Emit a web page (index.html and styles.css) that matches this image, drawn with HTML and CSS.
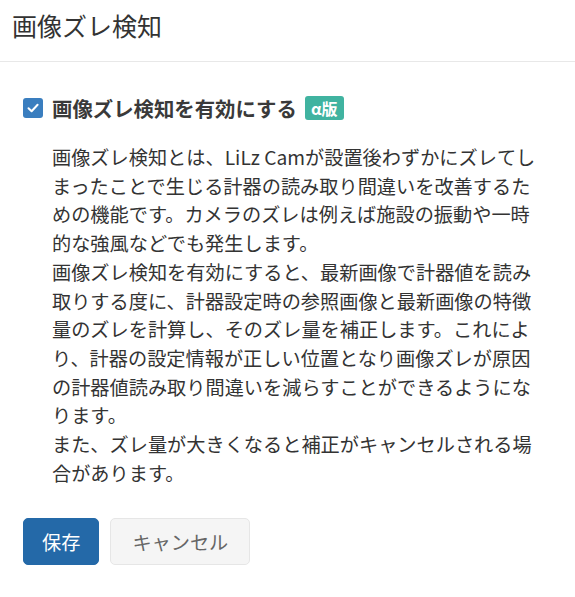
FILE: index.html
```html
<!DOCTYPE html>
<html lang="ja">
<head>
    <meta charset="UTF-8">
    <meta name="viewport" content="width=device-width, initial-scale=1.0">
    <title>画像ズレ検知</title>
    <link rel="stylesheet" href="styles.css">
</head>
<body>
    <div class="modal-header">
        <h1>画像ズレ検知</h1>
    </div>
    <div class="modal-body">
        <label class="check-row">
            <span class="checkbox">
                <svg width="14" height="14" viewBox="0 0 14 14">
                    <path d="M2.5 7.2 L5.6 10.2 L11.6 3.8" fill="none" stroke="#fff" stroke-width="2" stroke-linecap="round" stroke-linejoin="round"/>
                </svg>
            </span>
            <span class="check-label">画像ズレ検知を有効にする</span>
            <span class="badge">α版</span>
        </label>
        <p class="description">
            画像ズレ検知とは、LiLz Camが設置後わずかにズレてし<br>
            まったことで生じる計器の読み取り間違いを改善するた<br>
            めの機能です。カメラのズレは例えば施設の振動や一時<br>
            的な強風などでも発生します。<br>
            画像ズレ検知を有効にすると、最新画像で計器値を読み<br>
            取りする度に、計器設定時の参照画像と最新画像の特徴<br>
            量のズレを計算し、そのズレ量を補正します。これによ<br>
            り、計器の設定情報が正しい位置となり画像ズレが原因<br>
            の計器値読み取り間違いを減らすことができるようにな<br>
            ります。<br>
            また、ズレ量が大きくなると補正がキャンセルされる場<br>
            合があります。
        </p>
        <div class="actions">
            <button class="btn btn-primary">保存</button>
            <button class="btn btn-default">キャンセル</button>
        </div>
    </div>
</body>
</html>
```

FILE: styles.css
```css
body {
    margin: 0;
    font-family: "Noto Sans CJK JP", "Noto Sans", sans-serif;
    color: #333;
    background-color: #fff;
}
.modal-header {
    height: 61px;
    padding: 0 12px;
    border-bottom: 1px solid #e8e8e8;
    display: flex;
    align-items: center;
}
h1 {
    margin: 0;
    margin-top: -12px;
    font-size: 25px;
    font-weight: 400;
    color: #333;
}
.modal-body {
    padding: 33px 23px 0 23px;
}
.check-row {
    display: flex;
    align-items: center;
    height: 26px;
}
.checkbox {
    width: 20px;
    height: 20px;
    border-radius: 3px;
    background-color: #3a7ebf;
    display: flex;
    align-items: center;
    justify-content: center;
}
.check-label {
    margin-left: 9px;
    font-size: 20.4px;
    font-weight: 700;
    color: #3a3a3a;
}
.badge {
    margin-left: 8px;
    background-color: #40b3a0;
    color: #fff;
    font-size: 16px;
    font-weight: 700;
    height: 24px;
    line-height: 24px;
    padding: 0 6px;
    border-radius: 3px;
}
.description {
    margin: 22px 0 0 29px;
    font-size: 19.2px;
    line-height: 28.7px;
    color: #333;
    white-space: nowrap;
}
.actions {
    display: flex;
    gap: 11px;
    margin-top: 31px;
}
.btn {
    height: 47px;
    padding: 0 18px;
    font-family: inherit;
    font-size: 19.2px;
    border-radius: 5px;
    cursor: pointer;
}
.btn-primary {
    background-color: #2469a8;
    color: #fff;
    border: 1px solid #2469a8;
}
.btn-default {
    padding: 0 21px;
    background-color: #f5f5f5;
    color: #666;
    border: 1px solid #e6e6e6;
}
```
